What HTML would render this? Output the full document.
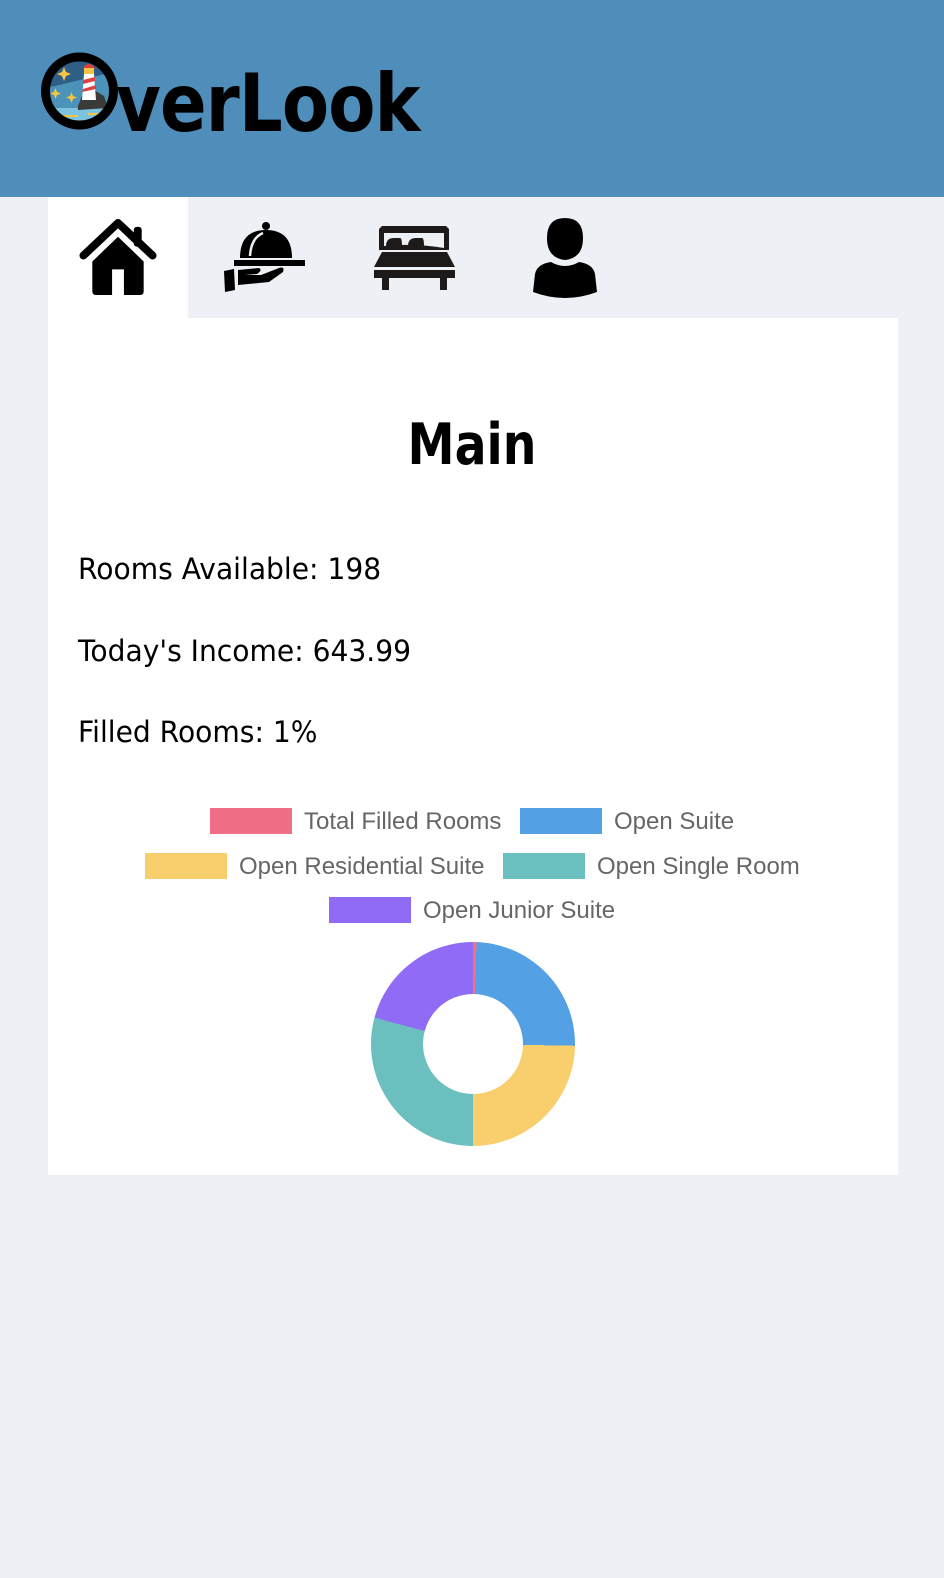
<!DOCTYPE html>
<html><head><meta charset="utf-8"><style>
*{margin:0;padding:0;box-sizing:border-box}
body{width:944px;height:1578px;background:#edf0f5;position:relative;overflow:hidden;font-family:"Liberation Sans",sans-serif}
.hdr{position:absolute;left:0;top:0;width:944px;height:197px;background:#4f8dba}
.logo{position:absolute;left:116px;top:57px;font-weight:bold;font-size:80px;color:#000;letter-spacing:-1px;font-family:"DejaVu Sans","Liberation Sans",sans-serif;transform:scaleX(0.86);transform-origin:left}
.tab{position:absolute;left:48px;top:197px;width:140px;height:122px;background:#fff}
.card{position:absolute;left:48px;top:318px;width:850px;height:857px;background:#fff}
.h1{position:absolute;left:0;width:944px;top:412px;text-align:center;font-size:57px;font-weight:bold;font-family:"DejaVu Sans",sans-serif;transform:scaleX(0.83)}
.t{position:absolute;left:78px;font-size:29px;font-family:"DejaVu Sans",sans-serif;transform:scaleX(0.97);transform-origin:left;white-space:nowrap}
.sw{position:absolute;width:82px;height:26px}
.lt{position:absolute;font-size:24px;color:#666;white-space:nowrap;line-height:26px}
svg{position:absolute}
</style></head><body>
<div class="hdr"></div>
<svg style="left:38px;top:50px" width="84" height="84" viewBox="0 0 84 84">
<defs><clipPath id="c"><circle cx="41.5" cy="41" r="30"/></clipPath></defs>
<g clip-path="url(#c)">
<rect width="84" height="84" fill="#2f5f86"/>
<path d="M0 40 L84 20 L84 60 L0 60Z" fill="#4b93b8"/>
<rect y="58" width="84" height="26" fill="#7cc3e0"/>
<path d="M20 66 h20 M30 72 h22 M50 64 h14" stroke="#f7c443" stroke-width="2"/>
<path d="M40 56 L44 46 L56 40 L66 46 L70 58 L40 60Z" fill="#3a3a3a"/>
<path d="M46 24 L56 24 L58 50 L44 50Z" fill="#fff"/>
<path d="M45 30 L57 27 L57 31 L45 34Z M45 39 L58 35 L58 39 L44 42Z" fill="#e04040"/>
<rect x="46" y="17" width="10" height="7" fill="#f7c443"/>
<path d="M45 18 Q51 10 57 18Z" fill="#e04040"/>
<path d="M24 22 l2 -5 l2 5 l5 2 l-5 2 l-2 5 l-2 -5 l-5 -2Z M16 42 l1.5 -4 l1.5 4 l4 1.5 l-4 1.5 l-1.5 4 l-1.5 -4 l-4 -1.5Z M32 46 l1.5 -4 l1.5 4 l4 1.5 l-4 1.5 l-1.5 4 l-1.5 -4 l-4 -1.5Z" fill="#f7c443"/>
</g>
<circle cx="41.5" cy="41" r="34" fill="none" stroke="#000" stroke-width="9"/>
</svg>
<div class="logo">verLook</div>
<div class="tab"></div>
<svg style="left:78px;top:218px" width="80" height="79" viewBox="0 0 80 80">
<polyline points="5,38 40,5 75,38" fill="none" stroke="#000" stroke-width="8" stroke-linecap="round" stroke-linejoin="round"/>
<rect x="56" y="9" width="8" height="20" rx="3"/>
<path d="M14 44 L40 19 L66 44 V74 Q66 78 62 78 H46 V52 H34 V78 H18 Q14 78 14 74Z"/>
</svg>
<svg style="left:223px;top:220px" width="84" height="74" viewBox="0 0 84 74">
<circle cx="43" cy="6" r="4"/>
<path d="M17 38 Q17 10 43 10 Q69 10 69 38Z"/>
<path d="M27 36 Q28 18 40 13" stroke="#edf0f5" stroke-width="2.5" fill="none"/>
<rect x="11" y="40" width="71" height="6"/>
<path d="M1 51 L11 49 L12 70 L2 72Z"/>
<path d="M15 50 L36 48 Q40 50 34 54 L22 55 L38 55 L56 48 Q62 46 60 52 L46 62 L15 65Z"/>
</svg>
<svg style="left:374px;top:226px" width="81" height="65" viewBox="0 0 81 65">
<path d="M8 0 H72 L75 3 V24 H5 V3Z M10 7 V22 H70 V7Z" fill-rule="evenodd" fill="#1e1a1a"/>
<path d="M12 20 Q12 12 20 12 H26 Q28 12 28 20Z M34 20 Q34 12 42 12 H48 Q50 12 50 20Z" fill="#1e1a1a"/>
<path d="M10 20 Q40 17 70 22 L70 24 L10 24Z" fill="#1e1a1a"/>
<path d="M8 26 H73 L81 41 H0Z" fill="#1e1a1a"/>
<rect x="0" y="44" width="81" height="8" fill="#1e1a1a"/>
<rect x="8" y="52" width="7" height="12" fill="#1e1a1a"/>
<rect x="66" y="52" width="7" height="12" fill="#1e1a1a"/>
</svg>
<svg style="left:533px;top:218px" width="64" height="80" viewBox="0 0 64 80">
<path d="M14 20 Q14 0 32 0 Q50 0 50 20 Q50 40 32 42 Q14 40 14 20Z"/>
<path d="M0 74 L2 56 Q4 46 18 44 Q32 52 46 44 Q60 46 62 56 L64 74 Q32 86 0 74Z"/>
</svg>
<div class="card"></div>
<div class="h1">Main</div>
<div class="t" style="top:552px">Rooms Available: 198</div>
<div class="t" style="top:634px">Today's Income: 643.99</div>
<div class="t" style="top:715px">Filled Rooms: 1%</div>
<div class="sw" style="left:210px;top:808px;background:#f06f87"></div><div class="lt" style="left:304px;top:809px">Total Filled Rooms</div>
<div class="sw" style="left:520px;top:808px;background:#53a1e4"></div><div class="lt" style="left:614px;top:809px">Open Suite</div>
<div class="sw" style="left:145px;top:853px;background:#f9cf6d"></div><div class="lt" style="left:239px;top:854px">Open Residential Suite</div>
<div class="sw" style="left:503px;top:853px;background:#6bbfbf"></div><div class="lt" style="left:597px;top:854px">Open Single Room</div>
<div class="sw" style="left:329px;top:897px;background:#906bf5"></div><div class="lt" style="left:423px;top:898px">Open Junior Suite</div>
<div style="position:absolute;left:371px;top:942px;width:204px;height:204px;border-radius:50%;background:conic-gradient(#f06f87 0deg 2deg,#53a1e4 2deg 91deg,#f9cf6d 91deg 180deg,#6bbfbf 180deg 285deg,#906bf5 285deg 360deg)"></div>
<div style="position:absolute;left:423px;top:994px;width:100px;height:100px;border-radius:50%;background:#fff"></div>
</body></html>
